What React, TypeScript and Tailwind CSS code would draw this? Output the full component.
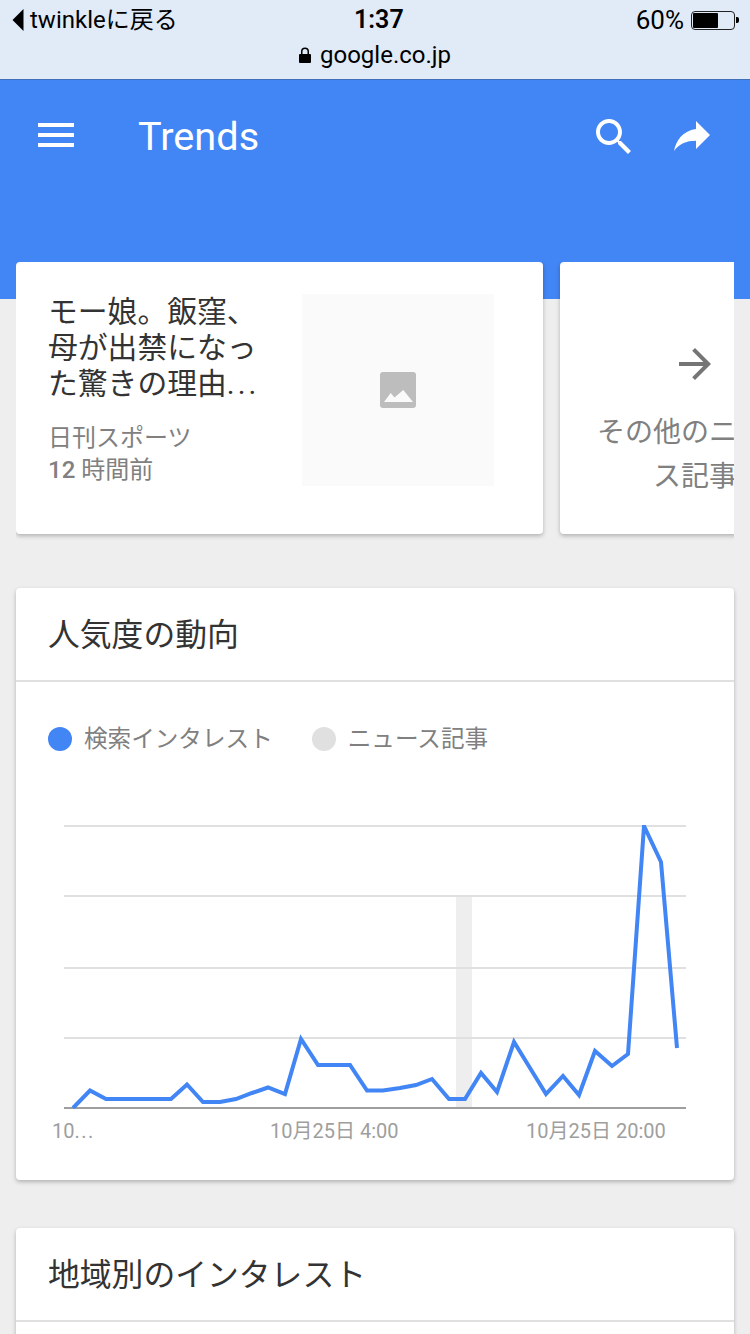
const FONT = "font-['Roboto','Noto_Sans_CJK_JP',sans-serif]";

const POINTS = [
  [73, 1108], [90, 1090.5], [106, 1099], [122, 1099], [138, 1099], [155, 1099], [171, 1099], [187, 1084.5],
  [203, 1102], [220, 1102], [236, 1099], [252, 1093], [268, 1087.5], [285, 1094], [301, 1039], [318, 1065],
  [334, 1065], [350, 1065], [367, 1090.5], [383, 1090.5], [400, 1088], [416, 1085], [432, 1079], [449, 1099],
  [465, 1099], [481, 1073], [497, 1092], [514, 1042], [530, 1068], [546, 1094], [563, 1076], [579, 1095],
  [595, 1051], [612, 1066], [628, 1054], [644, 826], [661, 862], [677, 1048],
]
  .map((p) => p.join(","))
  .join(" ");

function MIcon({ d, className }: { d: string; className: string }) {
  return (
    <svg viewBox="0 0 24 24" className={className} fill="currentColor">
      <path d={d} />
    </svg>
  );
}

function StatusBar() {
  return (
    <div className="h-[80px] bg-[#e0ebf7] border-b border-[#3f6fb8] text-black flex flex-col">
      <div className="h-[40px] relative flex items-center justify-between pl-[12px] pr-[11px]">
        <div className="flex items-center">
          <svg viewBox="0 0 12 24" className="w-[12px] h-[22px] mr-[6px]" fill="#000">
            <path d="M12 0v24L0 12z" />
          </svg>
          <span className="text-[24px] leading-[30px]">twinkleに戻る</span>
        </div>
        <span className="absolute left-[354px] top-[5px] text-[25px] leading-[30px] font-semibold">1:37</span>
        <div className="flex items-center">
          <span className="text-[26px] leading-[30px] mr-[7px]">60%</span>
          <div className="w-[44px] h-[19px] border border-[#222222] rounded-[4px] p-[1px]">
            <div className="w-[25px] h-full bg-black rounded-[1px]" />
          </div>
          <div className="ml-[1px] w-[3px] h-[6px] bg-black rounded-r-[2px]" />
        </div>
      </div>
      <div className="flex-1 flex items-center justify-center pb-[9px]">
        <svg viewBox="0 0 12 16" className="w-[12px] h-[16px] mr-[9px]" fill="#000">
          <path d="M1 7h1V4.500a4 4 0 0 1 8 0V7h1a1 1 0 0 1 1 1v7a1 1 0 0 1-1 1H1a1 1 0 0 1-1-1V8a1 1 0 0 1 1-1zm2.500 0h5V4.500a2.500 2.500 0 0 0-5 0z" />
        </svg>
        <span className="text-[24px] leading-[30px]">google.co.jp</span>
      </div>
    </div>
  );
}

function AppHeader() {
  return (
    <div className="h-[219px] bg-[#4285f4] text-white">
      <div className="flex items-center pt-[30px] pl-[32px] pr-[34px]">
        <MIcon d="M3 18h18v-2H3v2zm0-5h18v-2H3v2zm0-7v2h18V6H3z" className="w-[48px] h-[48px] mt-[-2px]" />
        <span className="ml-[58px] mt-[3px] text-[39.7px] leading-[48px] flex-1">Trends</span>
        <MIcon
          d="M15.500 14h-.79l-.28-.27C15.410 12.590 16 11.110 16 9.500 16 5.910 13.090 3 9.500 3S3 5.910 3 9.500 5.910 16 9.500 16c1.610 0 3.090-.59 4.230-1.570l.27.28v.79l5 4.990L20.490 19l-4.990-5zm-6 0C7.010 14 5 11.990 5 9.500S7.010 5 9.500 5 14 7.010 14 9.500 11.990 14 9.500 14z"
          className="w-[48px] h-[48px] mt-[2px]"
        />
        <MIcon
          d="M14 9V5l7 7-7 7v-4.100c-5 0-8.500 1.600-11 5.100 1-5 4-10 11-11z"
          className="w-[48px] h-[48px] ml-[30px] mt-[-2px]"
        />
      </div>
    </div>
  );
}

function NewsRow() {
  return (
    <div className="mt-[-37px] mx-[16px] flex gap-[17px] overflow-hidden pb-[8px] mb-[46px]">
      <div className="w-[527px] h-[272px] shrink-0 bg-white rounded-[4px] shadow-[0_2px_4px_rgba(0,0,0,0.25)] flex pl-[33px] pt-[32px]">
        <div className="w-[220px] mr-[33px] ml-[-1px] pr-[6px]">
          <div className="text-[29.8px] leading-[36px] text-[#333333] h-[108px] overflow-hidden">
            モー娘。飯窪、母が出禁になった驚きの理由<span className="tracking-[3px]">...</span>
          </div>
          <div className="mt-[21px] text-[24px] leading-[30px] text-[#808080]">日刊スポーツ</div>
          <div className="mt-[2px] text-[24px] leading-[30px] text-[#808080]">
            <span className="font-medium">12</span> 時間前
          </div>
        </div>
        <div className="ml-[1px] w-[192px] h-[192px] bg-[#fafafa] flex items-center justify-center">
          <svg viewBox="0 0 36 36" className="w-[36px] h-[36px]">
            <rect width="36" height="36" rx="3" fill="#bdbdbd" />
            <path d="M4 30 10.700 21 14.500 25.500 23.300 18 33 30z" fill="#fafafa" />
          </svg>
        </div>
      </div>
      <div className="w-[270px] h-[272px] shrink-0 bg-white rounded-[4px] shadow-[0_2px_4px_rgba(0,0,0,0.25)] flex flex-col items-center pt-[78px]">
        <MIcon
          d="M12 4l-1.410 1.410L16.170 11H4v2h12.170l-5.580 5.590L12 20l8-8z"
          className="w-[48px] h-[48px] text-[#757575]"
        />
        <div className="mt-[23px] w-[206px] text-center text-[28px] leading-[44px] text-[#808080]">その他のニュース記事</div>
      </div>
    </div>
  );
}

function ChartCard() {
  return (
    <div className="mx-[16px] h-[592px] bg-white rounded-[4px] shadow-[0_2px_4px_rgba(0,0,0,0.25)]">
      <div className="h-[94px] border-b-2 border-[#e0e0e0] pl-[32px] pt-[1px] flex items-center">
        <span className="text-[31.8px] leading-[40px] text-[#333333]">人気度の動向</span>
      </div>
      <div className="h-[108px] flex items-start pl-[32px] pt-[42px] text-[23.6px] leading-[30px] text-[#808080]">
        <span className="w-[24px] h-[24px] mt-[3px] rounded-full bg-[#4285f4]" />
        <span className="ml-[12px]">検索インタレスト</span>
        <span className="w-[24px] h-[24px] mt-[3px] ml-[39px] rounded-full bg-[#e0e0e0]" />
        <span className="ml-[12px]">ニュース記事</span>
      </div>
      <svg viewBox="16 790 718 390" className="block w-[718px] h-[390px]">
        <defs>
          <clipPath id="plot">
            <rect x="64" y="825" width="622" height="284" />
          </clipPath>
        </defs>
        <rect x="456" y="896" width="16" height="212" fill="#eeeeee" />
        {[826, 896, 968, 1038].map((y) => (
          <line key={y} x1="64" x2="686" y1={y} y2={y} stroke="#e0e0e0" strokeWidth="2" />
        ))}
        <line x1="64" x2="686" y1="1108" y2="1108" stroke="#9e9e9e" strokeWidth="2" />
        <polyline points={POINTS} fill="none" stroke="#4285f4" strokeWidth="4" clipPath="url(#plot)" />
        <g fill="#9e9e9e" fontSize="20" fontFamily="Roboto, 'Noto Sans CJK JP', sans-serif">
          <text x="52" y="1138">
            10<tspan letterSpacing="1.5">...</tspan>
          </text>
          <text x="270" y="1138">10月25日 4:00</text>
          <text x="526" y="1138">10月25日 20:00</text>
        </g>
      </svg>
    </div>
  );
}

function RegionCard() {
  return (
    <div className="mx-[16px] mt-[48px] h-[200px] bg-white rounded-[4px] shadow-[0_2px_4px_rgba(0,0,0,0.25)]">
      <div className="h-[94px] border-b-2 border-[#e0e0e0] pl-[32px] pt-[1px] flex items-center">
        <span className="text-[31.8px] leading-[40px] text-[#333333]">地域別のインタレスト</span>
      </div>
    </div>
  );
}

export default function App() {
  return (
    <div className={`w-[750px] h-[1334px] overflow-hidden bg-[#eeeeee] ${FONT}`}>
      <StatusBar />
      <AppHeader />
      <NewsRow />
      <ChartCard />
      <RegionCard />
    </div>
  );
}
